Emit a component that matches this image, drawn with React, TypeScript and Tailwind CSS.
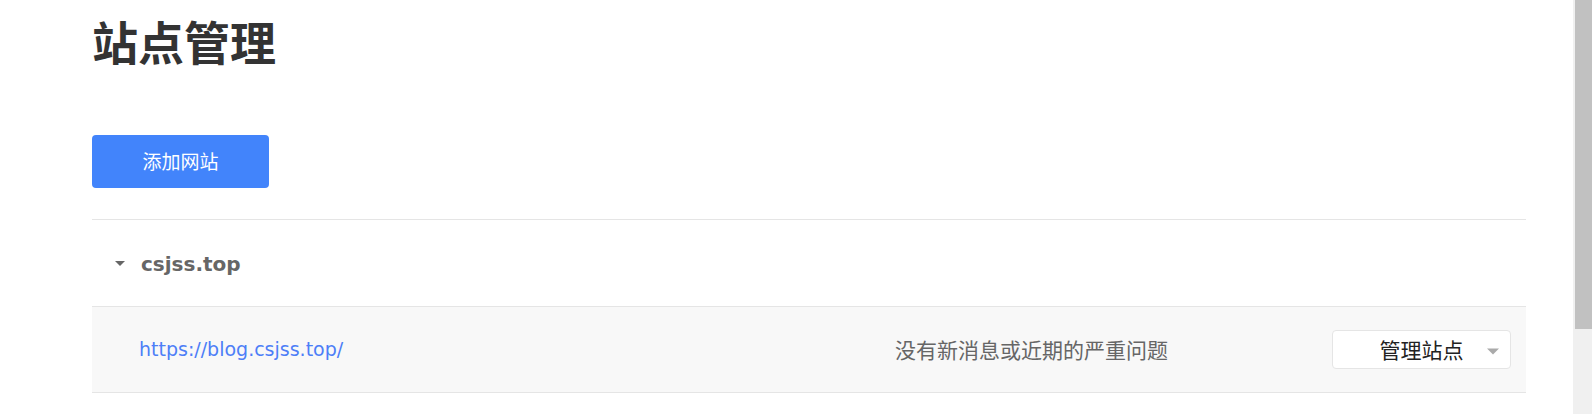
import React from "react";

const cjk = "font-['Noto_Sans_CJK_SC',sans-serif]";

function Caret({ className }: { className: string }) {
  return (
    <svg viewBox="0 0 10 5" className={className} fill="currentColor">
      <path d="M0 0h10L5 5z" />
    </svg>
  );
}

export default function App() {
  return (
    <div className="flex h-[414px] w-[1592px] overflow-hidden bg-white">
      <main className="flex-1 pl-[92px]">
        <div className="w-[1434px]">
          <h1
            className={`pt-[17px] text-[46px] leading-[46px] font-bold text-[#333] ${cjk}`}
          >
            站点管理
          </h1>

          <button
            className={`mt-[72px] h-[53px] w-[177px] rounded-[4px] bg-[#4284fb] text-[19px] text-white ${cjk}`}
          >
            添加网站
          </button>

          <div className="mt-[31px] border-t border-[#e5e5e5]">
            <div className="flex h-[86px] items-center pl-[23px]">
              <Caret className="h-[5px] w-[10px] text-[#666]" />
              <span className="ml-[16px] pt-[2px] font-['DejaVu_Sans'] text-[20px] font-bold text-[#666]">
                csjss.top
              </span>
            </div>

            <div className="flex h-[87px] items-center border-y border-[#e5e5e5] bg-[#f8f8f8] pl-[47px] pr-[15px]">
              <a className="w-[756px] font-['DejaVu_Sans'] text-[19px] text-[#4d7ef7]">
                https://blog.csjss.top/
              </a>
              <span className={`flex-1 text-[21px] text-[#666] ${cjk}`}>
                没有新消息或近期的严重问题
              </span>
              <div className="relative flex h-[39px] w-[179px] items-center justify-center rounded-[4px] border border-[#e5e5e5] bg-white">
                <span className={`text-[21px] text-[#222] ${cjk}`}>管理站点</span>
                <Caret className="absolute right-[11px] top-[17px] h-[7px] w-[12px] text-[#aaa]" />
              </div>
            </div>
          </div>
        </div>
      </main>
      <div className="w-[19px] bg-[#f0f0f0] pl-[2px]">
        <div className="h-[329px] bg-[#c1c1c1]" />
      </div>
    </div>
  );
}
